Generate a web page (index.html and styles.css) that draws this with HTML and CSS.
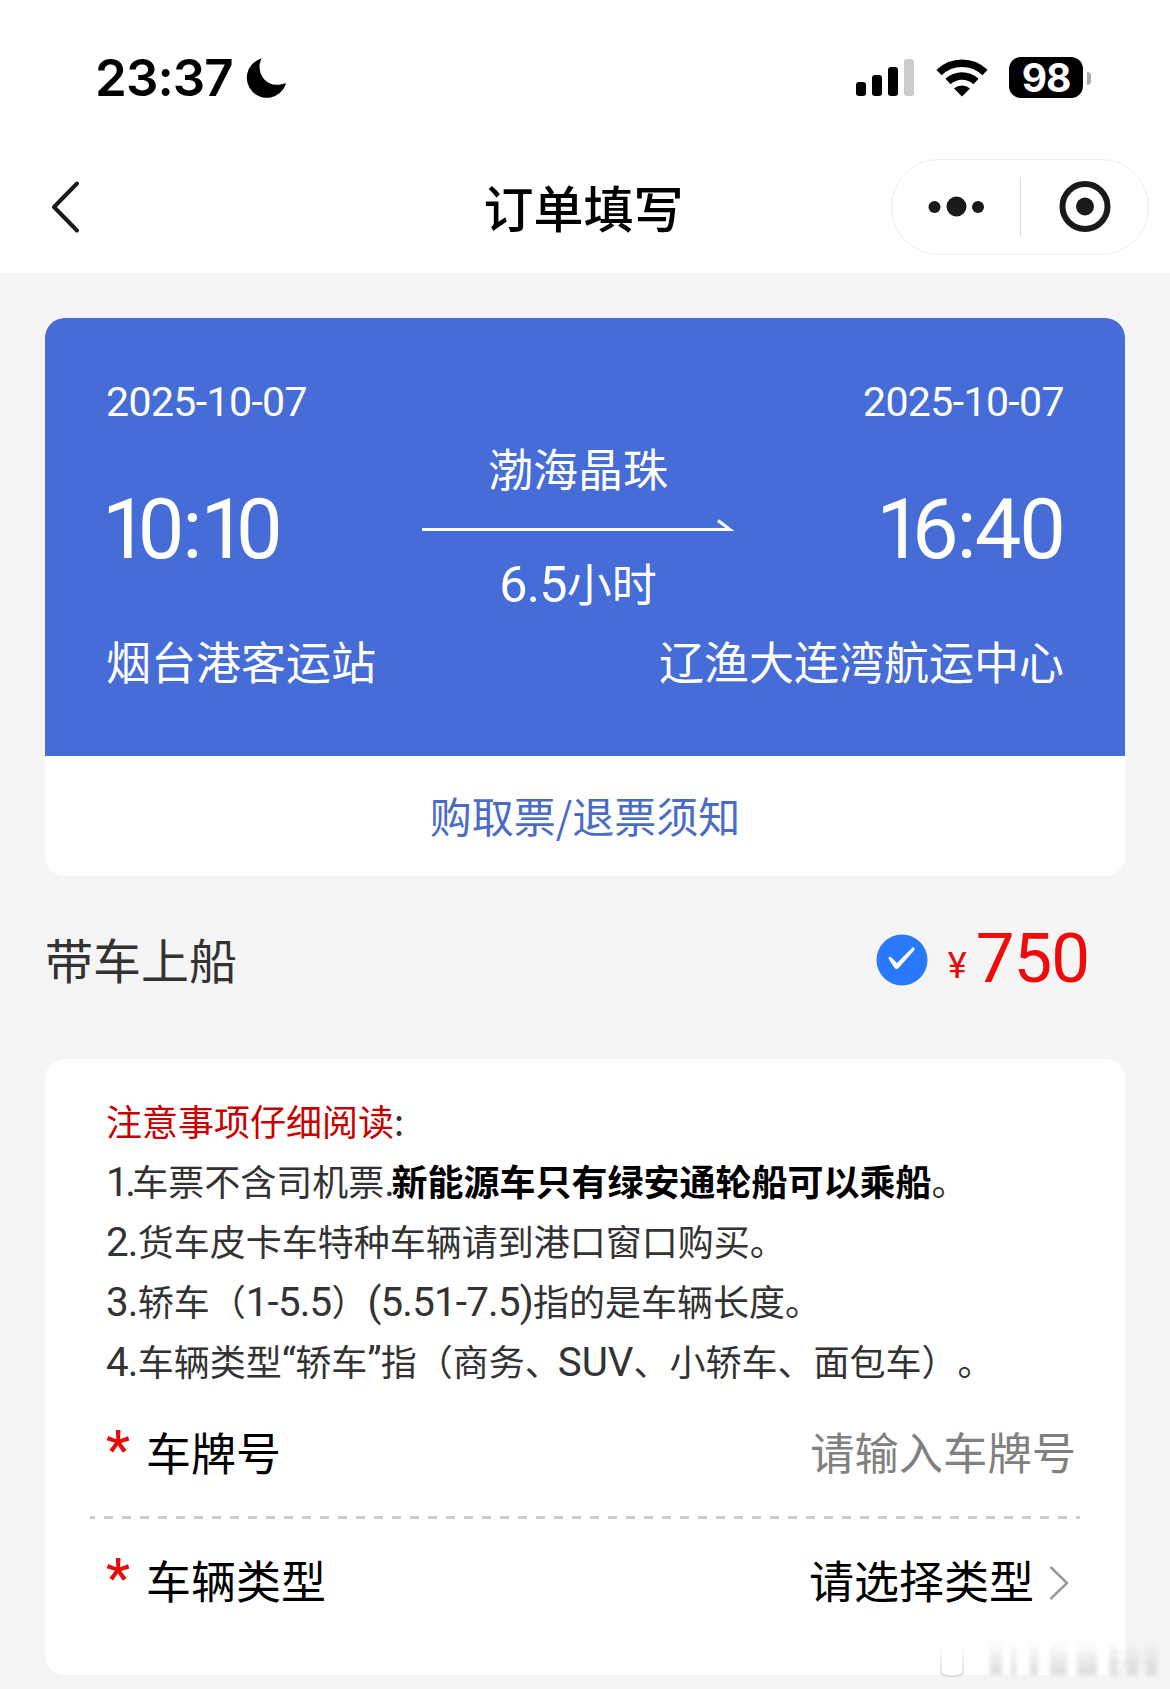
FILE: index.html
```html
<!DOCTYPE html>
<html lang="zh-CN">
<head>
<meta charset="utf-8">
<meta name="viewport" content="width=device-width, initial-scale=1">
<title>订单填写</title>
<link rel="stylesheet" href="styles.css">
</head>
<body>

<div class="top">
  <div class="status">
    <span class="clock">23:37</span>
    <svg class="moon" width="40" height="40" viewBox="0 0 40 40"><path d="M15.500 .5C9 13 19 32 38.500 25.500C40 25 40 26 39.500 27A20 20 0 1 1 14 1C15 .2 16 0 15.500 .5Z"/></svg>
    <svg class="signal" width="58" height="38" viewBox="0 0 58 38">
      <rect x="0" y="23" width="10" height="14" rx="3"/>
      <rect x="16" y="16" width="10" height="21" rx="3"/>
      <rect x="32" y="8" width="10" height="29" rx="3"/>
      <rect x="48" y="0" width="10" height="37" rx="3" fill="#ccc"/>
    </svg>
    <svg class="wifi" width="52" height="38" viewBox="0 0 52 38">
      <g fill="none" stroke="#000" stroke-width="7.500">
        <path d="M3 13.500A33 33 0 0 1 49 13.500"/>
        <path d="M12 22.500A20.500 20.500 0 0 1 40 22.500"/>
      </g>
      <path d="M26 37.500L18 29.500A12 12 0 0 1 34 29.500Z"/>
    </svg>
    <span class="battery">98</span>
    <span class="nub"></span>
  </div>
  <div class="nav">
    <svg class="back" width="30" height="54" viewBox="0 0 30 54"><path d="M27 3.500L4 27L27 50.500" fill="none" stroke="#1a1a1a" stroke-width="4" stroke-linecap="round" stroke-linejoin="round"/></svg>
    <h1>订单填写</h1>
    <div class="capsule">
      <svg width="128" height="94" viewBox="0 0 128 94" fill="#1a1a1a"><circle cx="42.500" cy="47" r="6"/><circle cx="64.500" cy="46.500" r="10"/><circle cx="86" cy="47" r="6"/></svg>
      <i></i>
      <svg width="127" height="94" viewBox="0 0 127 94"><circle cx="64" cy="46.500" r="22.500" fill="none" stroke="#1a1a1a" stroke-width="6"/><circle cx="64" cy="46.500" r="9" fill="#1a1a1a"/></svg>
    </div>
  </div>
</div>

<div class="ticket">
  <div class="trip">
    <div class="side">
      <div class="date">2025-10-07</div>
      <div class="time"><span class="one">1</span>0:<span class="one">1</span>0</div>
      <div class="port">烟台港客运站</div>
    </div>
    <div class="ship">
      <div>渤海晶珠</div>
      <svg width="312" height="16" viewBox="0 0 312 16" fill="none" stroke="#fff" stroke-width="3"><path d="M0 11.500H308L296 2.500"/></svg>
      <div><span class="num">6.5</span>小时</div>
    </div>
    <div class="side right">
      <div class="date">2025-10-07</div>
      <div class="time"><span class="one">1</span>6:40</div>
      <div class="port">辽渔大连湾航运中心</div>
    </div>
  </div>
  <a class="notice-link">购取票/退票须知</a>
</div>

<div class="car">
  <span class="car-title">带车上船</span>
  <svg class="check" width="52" height="52" viewBox="0 0 52 52"><circle cx="26" cy="26" r="25.500" fill="#2979ff"/><path d="M12.500 24.500Q13 21.500 16 24L21 29L36.500 13.500Q39 12.500 38.500 16L22.500 34Q20.500 36 18.500 34Z" fill="#fff"/></svg>
  <span class="yen">¥</span><span class="price">750</span>
</div>

<div class="panel">
  <div class="tips">
    <p><span class="red">注意事项仔细阅读</span>:</p>
    <p><span class="num l1">1.</span>车票不含司机票<span class="num l1">.</span><b>新能源车只有绿安通轮船可以乘船</b>。</p>
    <p><span class="num">2.</span>货车皮卡车特种车辆请到港口窗口购买。</p>
    <p><span class="num">3.</span>轿车（<span class="num">1-5.5</span>）<span class="num">(5.51-7.5)</span>指的是车辆长度。</p>
    <p><span class="num">4.</span>车辆类型<span class="num">“</span>轿车<span class="num">”</span>指（商务、<span class="num suv">SUV</span>、小轿车、面包车）。</p>
  </div>
  <div class="row">
    <span class="star">*</span>
    <span class="label">车牌号</span>
    <span class="placeholder">请输入车牌号</span>
  </div>
  <div class="dash"></div>
  <div class="row">
    <span class="star">*</span>
    <span class="label">车辆类型</span>
    <span class="select">请选择类型</span>
    <svg class="more" width="20" height="36" viewBox="0 0 20 36"><path d="M1.500 3L18 19L1.500 35" fill="none" stroke="#999" stroke-width="2.500"/></svg>
  </div>
</div>

<svg class="mark" width="230" height="44" viewBox="0 0 230 44">
  <defs>
    <linearGradient id="fade" gradientUnits="userSpaceOnUse" x1="0" y1="2" x2="0" y2="38"><stop offset="0" stop-color="#ddd" stop-opacity="0"/><stop offset="1" stop-color="#d8d8d8"/></linearGradient>
    <filter id="soft" x="-20%" y="-20%" width="140%" height="140%"><feGaussianBlur stdDeviation="2"/></filter>
  </defs>
  <path d="M9 6V35Q20 40 31 35V6" fill="#fff" stroke="url(#fade)" stroke-width="1.500"/>
  <g fill="url(#fade)" filter="url(#soft)">
    <rect x="58" y="2" width="12" height="34"/><rect x="79" y="2" width="5" height="34"/><rect x="98" y="2" width="8" height="34"/>
    <rect x="118" y="2" width="17" height="34"/><rect x="145" y="2" width="20" height="34"/><rect x="177" y="2" width="9" height="34"/>
    <rect x="195" y="2" width="11" height="34"/><rect x="214" y="2" width="11" height="34"/>
    <path d="M178 12H226V15H178ZM178 21H226V24H178Z"/>
  </g>
</svg>

</body>
</html>
```
FILE: styles.css
```css
body, html {
  margin: 0;
  height: 1689px;
  overflow: hidden;
}
body {
  background: #f5f5f5;
  position: relative;
  font-family: "Noto Sans CJK SC", sans-serif;
  text-spacing-trim: space-all;
  color: #000;
}
svg {display: block; flex: none;}

.top {height: 273px; background: #fff;}
.status {
  display: flex;
  align-items: center;
  height: 40px;
  padding: 58px 0 0 95px;
}
.clock {font: 600 51px/40px Inter, sans-serif; width: 151px; letter-spacing: -0.9px;}
.signal {margin-left: 570px;}
.wifi {margin-left: 22px;}
.battery {
  width: 74px;
  height: 41px;
  margin: -1px 0 0 21px;
  border-radius: 12px;
  background: #000;
  color: #fff;
  text-align: center;
  font: 700 39px/41px Inter, sans-serif;
  letter-spacing: -1px;
}
.nub {width: 4px; height: 13px; margin-left: 4px; background: #aaa; border-radius: 0 4px 4px 0;}

.nav {
  display: grid;
  grid-template-columns: 1fr auto 1fr;
  align-items: center;
  height: 98px;
  margin-top: 60px;
  padding: 0 21px 0 50px;
}
.nav h1 {margin: 0; font-size: 50px; line-height: 96px; padding-bottom: 2px; font-weight: 500; padding-right: 32px;}
.capsule {
  justify-self: end;
  display: flex;
  align-items: center;
  border: 1px solid #ececec;
  border-radius: 48px;
}
.capsule i {width: 1px; height: 60px; background: #ddd;}

.ticket {
  margin: 45px 45px 0;
  border-radius: 20px;
  overflow: hidden;
  background: #fff;
}
.trip {
  display: grid;
  grid-template-columns: 316px 312px minmax(0, 1fr);
  box-sizing: border-box;
  height: 438px;
  padding: 54px 61px 0;
  background: #466dd7;
  color: #fff;
  font-size: 45px;
  white-space: nowrap;
}
.right {display: flex; flex-direction: column; align-items: flex-end;}
.date {font: 41px/60px Roboto, sans-serif; letter-spacing: -0.6px;}
.time {font: 83px/100px Roboto, sans-serif; margin-top: 48px; letter-spacing: -2px;}
.one {letter-spacing: -11px;}
.one:first-child {margin-left: -4px;}
.port {line-height: 60px; margin-top: 51px;}
.ship {text-align: center; padding-top: 66px; line-height: 60px;}
.ship svg {margin: 20px 0 19px;}
.num {
  font-family: Roboto, "Noto Sans CJK SC", sans-serif;
  font-size: 1.12em;
  line-height: 1;
  letter-spacing: -0.8px;
}
.notice-link {
  display: block;
  text-align: center;
  color: #4a6cc6;
  font-size: 42px;
  line-height: 118px;
  padding-bottom: 2px;
}

.car {
  display: flex;
  align-items: center;
  height: 168px;
  padding: 0 81px 0 45px;
  margin-bottom: 15px;
}
.car-title {font-size: 48px; color: #333; flex: 1; padding-bottom: 4px;}
.yen {font: 36px/50px Roboto, sans-serif; color: #e60c0c; margin: 12px 9px 0 20px;}
.price {font: 69px/80px Roboto, sans-serif; color: #f00a0a; letter-spacing: -1px; padding-bottom: 2px;}

.panel {
  box-sizing: border-box;
  height: 616px;
  margin: 0 45px;
  padding-top: 31px;
  border-radius: 20px;
  background: #fff;
}
.tips {padding: 0 60px 1px 61px; font-size: 36px; color: #333; white-space: nowrap;}
.tips p {margin: 0; height: 60px; line-height: 60px;}
.tips b {color: #000;}
.tips .l1 {letter-spacing: -3.5px;}
.tips .suv {margin-left: -3px; letter-spacing: 0;}
.red {color: #c80000;}

.row {
  display: flex;
  align-items: center;
  box-sizing: border-box;
  height: 125px;
  padding: 0 56px 5px 61px;
  font-size: 45px;
}
.star {width: 40px; color: #e60c0c; font: 500 54px/60px Roboto, sans-serif; padding-bottom: 3px;}
.label {flex: 1;}
.placeholder {color: #808080; font-size: 44.3px; margin-right: -7px;}
.select {margin-right: 15px;}
.more {margin-top: 6px;}
.dash {
  height: 3px;
  margin: 0 45px;
  background: repeating-linear-gradient(90deg, #ccc 0 9px, #fff 9px 18px) 14px 0;
}

/* sits over the panel corner */
.mark {position: absolute; left: 932px; top: 1639px;}
```
